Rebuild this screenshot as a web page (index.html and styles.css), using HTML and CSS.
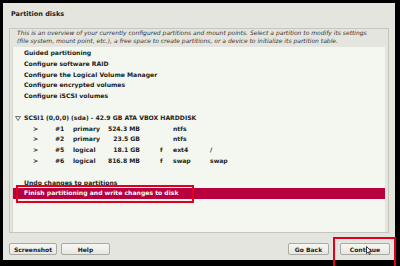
FILE: index.html
```html
<!DOCTYPE html>
<html lang="en">
<head>
    <meta charset="UTF-8">
    <title>Partition disks</title>
    <link rel="stylesheet" href="styles.css">
</head>
<body>
    <div class="window">
        <div class="title">Partition disks</div>

        <div class="frame">
            <p class="desc">This is an overview of your currently configured partitions and mount points. Select a partition to modify its settings<br>(file system, mount point, etc.), a free space to create partitions, or a device to initialize its partition table.</p>

            <div class="list">
                <div class="row item">Guided partitioning</div>
                <div class="row item">Configure software RAID</div>
                <div class="row item">Configure the Logical Volume Manager</div>
                <div class="row item">Configure encrypted volumes</div>
                <div class="row item">Configure iSCSI volumes</div>
                <div class="row"></div>
                <div class="row disk">
                    <svg class="tri" width="6" height="5" viewBox="0 0 6 5"><path d="M0.5 0.5 H5.5 L3 4.5 Z" fill="none" stroke="#555" stroke-width="0.8"/></svg>
                    SCSI1 (0,0,0) (sda) - 42.9 GB ATA VBOX HARDDISK
                </div>
                <div class="row part"><span>&gt;</span><span>#1</span><span>primary</span><span class="size">524.3 MB</span><span></span><span>ntfs</span><span></span></div>
                <div class="row part"><span>&gt;</span><span>#2</span><span>primary</span><span class="size">23.5 GB</span><span></span><span>ntfs</span><span></span></div>
                <div class="row part"><span>&gt;</span><span>#5</span><span>logical</span><span class="size">18.1 GB</span><span>f</span><span>ext4</span><span>/</span></div>
                <div class="row part"><span>&gt;</span><span>#6</span><span>logical</span><span class="size">816.8 MB</span><span>f</span><span>swap</span><span>swap</span></div>
                <div class="row"></div>
                <div class="row item">Undo changes to partitions</div>
                <div class="row item selected">Finish partitioning and write changes to disk</div>
            </div>
        </div>

        <div class="buttons">
            <button class="btn btn-shot">Screenshot</button>
            <button class="btn btn-help">Help</button>
            <span class="spacer"></span>
            <button class="btn btn-back">Go Back</button>
            <button class="btn btn-next">Continue</button>
        </div>
    </div>

    <!-- red annotation boxes drawn over the screenshot -->
    <div class="mark mark-finish"></div>
    <div class="mark mark-next"></div>

    <svg class="cursor" width="6" height="9" viewBox="0 0 6 9"><path d="M0.5 0.5 L0.5 7.5 L2.2 6 L3.4 8.5 L4.4 8 L3.3 5.6 L5.5 5.6 Z" fill="#fff" stroke="#000" stroke-width="0.7"/></svg>
</body>
</html>
```

FILE: styles.css
```css
/* General Styling */
body {
    margin: 0;
    width: 400px;
    height: 266px;
    overflow: hidden;
    background: #000;
    font-family: 'DejaVu Sans', sans-serif;
    color: #222;
    position: relative;
}

.window {
    margin: 3px 5px 0 3px;
    height: 257px;
    padding: 0 6px;
    box-sizing: border-box;
    background: #e5e5df;
    display: flex;
    flex-direction: column;
}

.title {
    height: 25px;
    padding-top: 7px;
    box-sizing: border-box;
    font-size: 6.5px;
    font-weight: bold;
    line-height: 8px;
    padding-left: 2px;
}

.frame {
    height: 205px;
    border: 1px solid #c6c6be;
    box-sizing: border-box;
    display: flex;
    flex-direction: column;
}

.desc {
    margin: 0;
    padding-left: 7px;
    font-size: 6px;
    font-style: italic;
    line-height: 8px;
    color: #333;
    white-space: nowrap;
}

.list {
    flex: 1;
    margin: 2px 3px 0 2px;
    padding-top: 1px;
    background: #f3f7ef;
    border-left: 1px solid #d4d6cf;
}

.row {
    height: 10.8px;
    line-height: 10.8px;
    font-size: 6.1px;
    font-weight: bold;
    white-space: nowrap;
}

.item {
    padding-left: 11px;
}

.selected {
    background: #b8003e;
    color: #fff;
}

.disk {
    padding-left: 2px;
    display: flex;
    align-items: center;
    gap: 3px;
}

/* arrow, number, type, size, flag, file system, mount point */
.part {
    display: grid;
    grid-template-columns: 22px 18px 27px 60px 13px 37px auto;
    padding-left: 20px;
}

.part .size {
    text-align: right;
    padding-right: 20px;
}

/* Buttons */
.buttons {
    display: flex;
    gap: 4px;
    margin-top: 10px;
}

.spacer {
    flex: 1;
}

.btn {
    height: 12px;
    padding: 0;
    font-family: 'DejaVu Sans', sans-serif;
    font-size: 6px;
    font-weight: bold;
    color: #222;
    background: linear-gradient(#f7f7f4, #e6e6e1);
    border: 1px solid #a9a9a2;
    border-radius: 2px;
}

.btn-shot { width: 48px; }
.btn-help { width: 49px; }
.btn-back { width: 41px; margin-right: 7px; }
.btn-next { width: 50px; margin-right: -1px; }

/* Annotations */
.mark {
    position: absolute;
    border: 2px solid #e0001c;
    box-sizing: border-box;
}

.mark-finish {
    left: 16px;
    top: 185px;
    width: 178px;
    height: 18px;
}

.mark-next {
    left: 333px;
    top: 237px;
    width: 63px;
    height: 32px;
}

.cursor {
    position: absolute;
    left: 366px;
    top: 246px;
}
```
